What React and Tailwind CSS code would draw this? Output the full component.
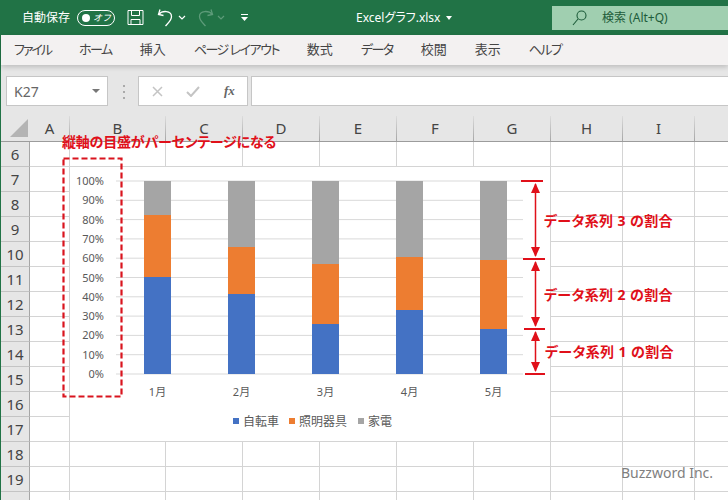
const font = "font-['Noto_Sans','Noto_Sans_CJK_JP',sans-serif]";

const tabs = [
  { label: "ファイル", track: "tracking-[-2px]" },
  { label: "ホーム", track: "tracking-[-1.5px]" },
  { label: "挿入", track: "" },
  { label: "ページ レイアウト", track: "tracking-[-1.5px]" },
  { label: "数式", track: "" },
  { label: "データ", track: "tracking-[-1.5px]" },
  { label: "校閲", track: "" },
  { label: "表示", track: "" },
  { label: "ヘルプ", track: "tracking-[-1.5px]" },
];
const columns = [
  { name: "A", width: "w-[40px]" },
  { name: "B", width: "w-[96px]" },
  { name: "C", width: "w-[77px]" },
  { name: "D", width: "w-[77px]" },
  { name: "E", width: "w-[77px]" },
  { name: "F", width: "w-[77px]" },
  { name: "G", width: "w-[77px]" },
  { name: "H", width: "w-[72px]" },
  { name: "I", width: "w-[72px]" },
  { name: "", width: "w-[40px]" },
];
const rows = [6, 7, 8, 9, 10, 11, 12, 13, 14, 15, 16, 17, 18, 19, 20];

// top of blue and orange segments in page pixels
const bars = [
  { x: 144, label: "1月", blue: 277, orange: 215 },
  { x: 228, label: "2月", blue: 294, orange: 247 },
  { x: 312, label: "3月", blue: 324, orange: 264 },
  { x: 396, label: "4月", blue: 310, orange: 257 },
  { x: 480, label: "5月", blue: 329, orange: 260 },
];

const TitleBar = () => (
  <div className="h-[35px] shrink-0 bg-[#217346] flex items-center pl-[21px] text-white text-[12px]">
    <span>自動保存</span>
    <div className="ml-[7px] w-[38px] h-[16px] rounded-full border border-white flex items-center pl-[4px] gap-[3px]">
      <span className="w-[8px] h-[8px] rounded-full bg-white"></span>
      <span className="text-[9px] italic leading-none">オフ</span>
    </div>
    <svg className="ml-[12px]" width="17" height="17" viewBox="0 0 17 17" fill="none" stroke="#fff" strokeWidth="1">
      <path d="M1 1.5h15v14H1z" />
      <path d="M4.5 1.5v5h8v-5M4 15.5v-5h9v5" />
    </svg>
    <svg className="ml-[13px]" width="18" height="20" viewBox="0 0 18 20" fill="none" stroke="#fff" strokeWidth="1.3">
      <path d="M3 1.5 1.5 6.5 6.5 7.5" />
      <path d="M1.8 6.2C5 2.5 14.5 2 14.5 8.5 14.5 12.5 11 15 8.5 18" />
    </svg>
    <svg className="ml-[3px]" width="8" height="5" viewBox="0 0 8 5" fill="none" stroke="#fff" strokeWidth="1.2">
      <path d="M1 1l3 3 3-3" />
    </svg>
    <svg className="ml-[10px]" width="18" height="20" viewBox="0 0 18 20" fill="none" stroke="#5d9b79" strokeWidth="1.3">
      <path d="M15 1.5 16.5 6.5 11.5 7.5" />
      <path d="M16.2 6.2C13 2.5 3.5 2 3.5 8.5 3.5 12.5 7 15 9.500 18" />
    </svg>
    <svg className="ml-[3px]" width="8" height="5" viewBox="0 0 8 5" fill="none" stroke="#5d9b79" strokeWidth="1.2">
      <path d="M1 1l3 3 3-3" />
    </svg>
    <svg className="ml-[15px]" width="9" height="8" viewBox="0 0 9 8" fill="#fff">
      <path d="M1 0h7v1H1zM1 3h7L4.500 7z" />
    </svg>
    <span className="ml-[107px] [font-feature-settings:'palt']">Excelグラフ.xlsx</span>
    <span className="ml-[6px] w-0 h-0 border-x-[3px] border-x-transparent border-t-[4px] border-t-white"></span>
    <div className="ml-auto w-[176px] h-[24px] mt-[1px] bg-[#a0cfb0] flex items-center pl-[20px] text-[#1d5c3a]">
      <svg width="15" height="16" viewBox="0 0 15 16" fill="none" stroke="#1d5c3a" strokeWidth="1.1">
        <circle cx="9.500" cy="5.500" r="4.500" />
        <path d="M6 9 1 15" />
      </svg>
      <span className="ml-[15px]">検索 (Alt+Q)</span>
    </div>
  </div>
);

const TabBar = () => (
  <div className="relative z-10 h-[30px] shrink-0 bg-[#f3f1f1] shadow-[0_2px_5px_rgba(0,0,0,0.18)] flex items-center pl-[13px] gap-[28px] text-[13px] text-[#444] [font-feature-settings:'palt']">
    {tabs.map((tab) => (
      <span key={tab.label} className={tab.track}>
        {tab.label}
      </span>
    ))}
  </div>
);

const FormulaBar = () => (
  <div className="h-[41px] shrink-0 bg-[#e6e6e6] flex items-end pl-[5px]">
    <div className="w-[102px] h-[30px] bg-white border border-[#c6c6c6] flex items-center justify-between pl-[7px] pr-[7px] text-[14px] text-[#666]">
      <span>K27</span>
      <span className="w-0 h-0 border-x-[4px] border-x-transparent border-t-[4px] border-t-[#777]"></span>
    </div>
    <div className="ml-[14px] mb-[7px] w-[3px] h-[14px] flex flex-col justify-between items-center">
      <span className="w-[2px] h-[2px] bg-[#aaa]"></span>
      <span className="w-[2px] h-[2px] bg-[#aaa]"></span>
      <span className="w-[2px] h-[2px] bg-[#aaa]"></span>
    </div>
    <div className="ml-[13px] w-[110px] h-[30px] bg-white border border-[#c6c6c6] flex items-center pl-[13px]">
      <svg width="11" height="11" viewBox="0 0 11 11" fill="none" stroke="#c4c4c4" strokeWidth="1.5">
        <path d="M1 1l9 9M10 1l-9 9" />
      </svg>
      <svg className="ml-[23px]" width="14" height="11" viewBox="0 0 14 11" fill="none" stroke="#c4c4c4" strokeWidth="2">
        <path d="M1 6l4 4 8-9" />
      </svg>
      <span className="ml-[24px] font-['Liberation_Serif',serif] italic font-bold text-[13px] text-[#666]">fx</span>
    </div>
    <div className="ml-[3px] flex-1 h-[30px] bg-white border border-[#c6c6c6] border-r-0"></div>
  </div>
);

const ColumnHeader = () => (
  <div className="h-[36px] shrink-0 bg-[#e6e6e6] flex items-end border-b border-[#9c9c9c]">
    <div className="w-[29px] shrink-0 h-[25px] relative">
      <svg className="absolute left-[9px] top-[3px]" width="18" height="18" viewBox="0 0 18 18" fill="#b4b4b4">
        <path d="M18 0v18H0z" />
      </svg>
    </div>
    {columns.map((col) => (
      <div key={col.name} className={`${col.width} shrink-0 h-[25px] flex`}>
        <span className="flex-1 text-center text-[15px] leading-[24px] text-[#444]">{col.name}</span>
        <span className="w-px bg-gradient-to-b from-[#dcdcdc] to-[#a6a6a6]"></span>
      </div>
    ))}
  </div>
);

const Sheet = () => (
  <div className="flex-1 overflow-hidden bg-white">
    {rows.map((row) => (
      <div key={row} className="flex h-[25px]">
        <div className="w-[29px] shrink-0 bg-[#e6e6e6] border-r border-b border-r-[#a6a6a6] border-b-[#c4c4c4] text-center text-[15px] leading-[24px] text-[#444]">
          {row}
        </div>
        {columns.map((col) => (
          <div
            key={col.name}
            className={`${col.width} shrink-0 border-r border-b border-[#d4d4d4]`}
          ></div>
        ))}
      </div>
    ))}
  </div>
);

const Chart = () => (
  <svg
    className="absolute left-[70px] top-[167px] bg-white"
    width="480"
    height="274"
    viewBox="70 167 480 274"
  >
    {Array.from({ length: 11 }).map((_, i) => {
      const y = 374 - i * 19.3;
      return (
        <g key={i}>
          <line x1="116" x2="523" y1={y} y2={y} stroke="#d9d9d9" strokeWidth="1" />
          <text x="104" y={y + 4} textAnchor="end" fontSize="11" fill="#595959">
            {i * 10}%
          </text>
        </g>
      );
    })}
    {bars.map((bar) => (
      <g key={bar.label}>
        <rect x={bar.x} y="181" width="27" height={bar.orange - 181} fill="#a5a5a5" />
        <rect x={bar.x} y={bar.orange} width="27" height={bar.blue - bar.orange} fill="#ed7d31" />
        <rect x={bar.x} y={bar.blue} width="27" height={374 - bar.blue} fill="#4472c4" />
        <text x={bar.x + 13.5} y="396" textAnchor="middle" fontSize="11" fill="#595959">
          {bar.label}
        </text>
      </g>
    ))}
    <rect x="233" y="418" width="6" height="6" fill="#4472c4" />
    <text x="243" y="426" fontSize="12" fill="#595959">自転車</text>
    <rect x="289" y="418" width="6" height="6" fill="#ed7d31" />
    <text x="299" y="426" fontSize="12" fill="#595959">照明器具</text>
    <rect x="358" y="418" width="6" height="6" fill="#a5a5a5" />
    <text x="368" y="426" fontSize="12" fill="#595959">家電</text>
  </svg>
);

// dashed box and the arrows over the sheet
const Marks = () => (
  <svg className="absolute left-0 top-0" width="728" height="500" viewBox="0 0 728 500" fill="none">
    <rect x="63.500" y="158.500" width="58" height="238" stroke="#d9141e" strokeWidth="2.2" strokeDasharray="6 3" />
    <g stroke="#e0101a" strokeWidth="2">
      <path d="M521 181h22M523 259h22M524 329h21M525 374h20" />
      <path d="M535.500 184v72M535.500 262v64M535.500 332v39" strokeWidth="1.5" />
    </g>
    <g fill="#e0101a">
      <path d="M535.500 183l4.500 10h-9zM535.500 257l4.500-10h-9z" />
      <path d="M535.500 261l4.500 10h-9zM535.500 327l4.500-10h-9z" />
      <path d="M535.500 331l4.500 10h-9zM535.500 372l4.500-10h-9z" />
    </g>
  </svg>
);

const notes = [
  { text: "データ系列 3 の割合", pos: "left-[544px] top-[211px]" },
  { text: "データ系列 2 の割合", pos: "left-[544px] top-[285px]" },
  { text: "データ系列 1 の割合", pos: "left-[545px] top-[342px]" },
];

export default function App() {
  return (
    <div className={`relative w-[728px] h-[500px] overflow-hidden bg-white ${font}`}>
      <div className="h-full flex flex-col border-l border-[#217346]">
        <TitleBar />
        <TabBar />
        <FormulaBar />
        <ColumnHeader />
        <Sheet />
      </div>
      <Chart />
      <Marks />
      <span className="absolute left-[62px] top-[132px] text-[14px] tracking-[-0.2px] leading-[20px] font-bold text-[#e0101a] whitespace-nowrap [font-feature-settings:'palt']">
        縦軸の目盛がパーセンテージになる
      </span>
      {notes.map((note) => (
        <span
          key={note.text}
          className={`absolute ${note.pos} text-[14px] tracking-[0.4px] leading-[20px] font-bold text-[#e0101a] whitespace-nowrap [font-feature-settings:'palt']`}
        >
          {note.text}
        </span>
      ))}
      <span className="absolute left-[621px] top-[463px] text-[14px] leading-[20px] text-[#7f7f7f]">
        Buzzword Inc.
      </span>
    </div>
  );
}
